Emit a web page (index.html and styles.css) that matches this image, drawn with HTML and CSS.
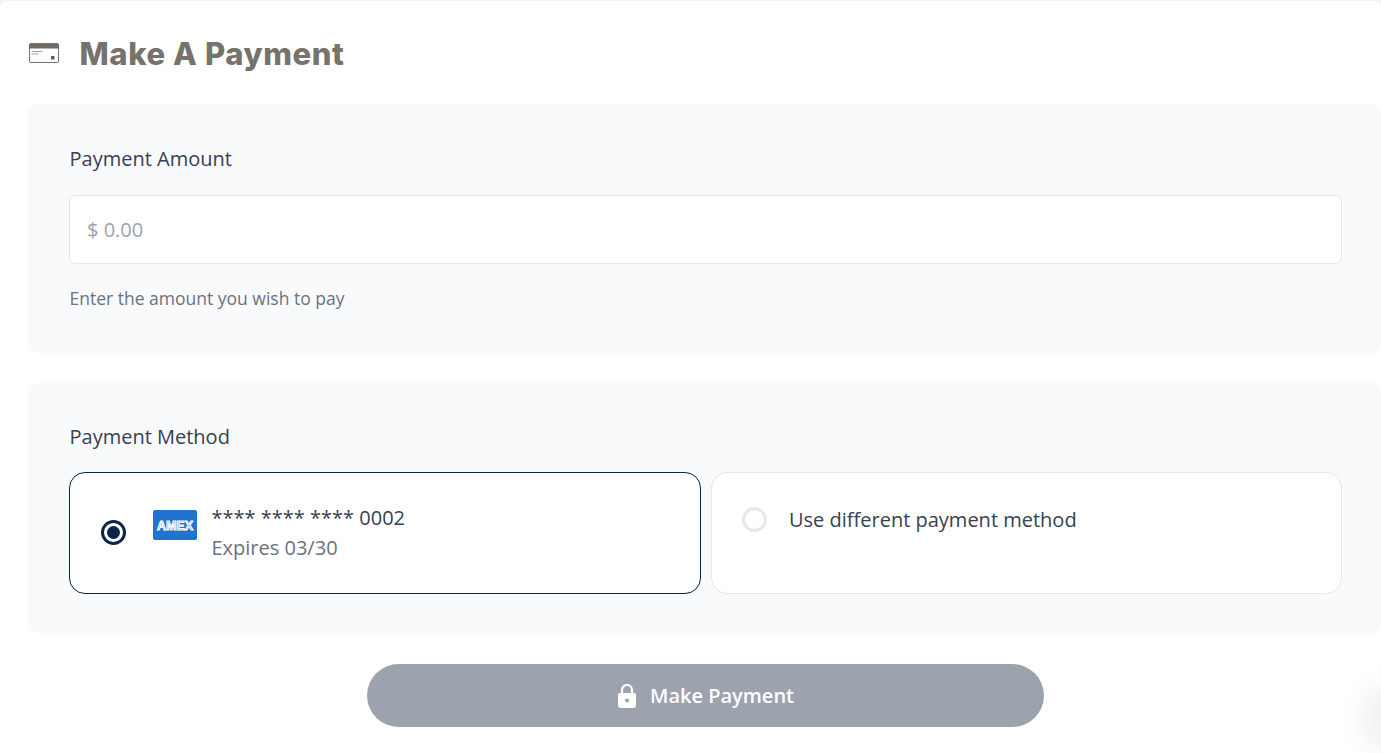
FILE: index.html
```html
<!DOCTYPE html>
<html lang="en">
<head>
<meta charset="utf-8">
<title>Make A Payment</title>
<link rel="stylesheet" href="styles.css">
</head>
<body>
<main class="page">
  <header class="title-row">
    <svg class="title-icon" width="32" height="22" viewBox="0 0 32 22" aria-hidden="true">
      <rect x="1.5" y="1.5" width="29" height="19" rx="1.5" fill="#fff" stroke="#77726b" stroke-width="1"/>
      <rect x="1" y="2" width="30" height="4.5" fill="#6f6a64"/>
      <rect x="3.5" y="9" width="11" height="1" fill="#a5a29d"/>
      <rect x="3.5" y="11.5" width="7" height="1" fill="#a5a29d"/>
      <rect x="23" y="14" width="3.5" height="3.5" fill="#5f5b55"/>
    </svg>
    <h1 class="title">Make A Payment</h1>
  </header>

  <section class="panel panel-amount">
    <label class="label">Payment Amount</label>
    <div class="input">$ 0.00</div>
    <p class="hint">Enter the amount you wish to pay</p>
  </section>

  <section class="panel panel-method">
    <label class="label">Payment Method</label>
    <div class="methods">
      <div class="method selected">
        <span class="radio-on"></span>
        <svg class="amex" width="44" height="30" viewBox="0 0 44 30" aria-hidden="true">
          <rect width="44" height="30" rx="2" fill="#2272cf"/>
          <text x="4" y="19.5" textLength="36" lengthAdjust="spacingAndGlyphs" class="amex-text">AMEX</text>
        </svg>
        <div class="card-info">
          <div class="card-number">**** **** **** 0002</div>
          <div class="card-exp">Expires 03/30</div>
        </div>
      </div>
      <div class="method other">
        <span class="radio-off"></span>
        <span class="other-text">Use different payment method</span>
      </div>
    </div>
  </section>

  <div class="actions">
    <button class="pay" type="button">
      <svg width="20" height="24" viewBox="0 0 20 24" aria-hidden="true">
        <path d="M5 10V6a5 5 0 0 1 10 0v4" fill="none" stroke="#fff" stroke-width="2.2"/>
        <path fill-rule="evenodd" fill="#fff" d="M2.500 9h15a1.500 1.500 0 0 1 1.500 1.500V21a3 3 0 0 1-3 3H4a3 3 0 0 1-3-3V10.500A1.500 1.500 0 0 1 2.500 9zM10 14.500a2 2 0 1 0 0 4 2 2 0 0 0 0-4z"/>
      </svg>
      <span>Make Payment</span>
    </button>
  </div>
</main>
<div class="corner-shadow"></div>
</body>
</html>
```

FILE: styles.css
```css
* { box-sizing: border-box; }
html, body { height: 100%; }
body {
  margin: 0;
  background: #f3f4f6;
  font-family: "Open Sans", "Liberation Sans", sans-serif;
  color: #374151;
  overflow: hidden;
  padding-top: 1px;
}
.page {
  background: #fff;
  border-radius: 8px 8px 0 0;
  height: 752px;
  padding: 0 0 0 28px;
}
.title-row {
  display: flex;
  align-items: center;
  height: 103px;
}
.title-icon { margin-right: 19.5px; }
.title {
  margin: 2px 0 0;
  font-family: "Inter", "Liberation Sans", sans-serif;
  font-size: 31px;
  font-weight: 800;
  letter-spacing: 0.6px;
  color: #77726b;
  line-height: 1;
}
.panel {
  background: #f9fafb;
  border-radius: 8px;
  padding: 0 39px 0 41px;
}
.panel-amount { height: 249px; padding-top: 41px; }
.panel-method { height: 250px; margin-top: 30px; padding-top: 40px; }
.label {
  display: block;
  padding-left: 0.5px;
  font-size: 20px;
  line-height: 27px;
  color: #374151;
}
.input {
  margin-top: 23px;
  height: 69px;
  background: #fff;
  border: 1px solid #e5e7eb;
  border-radius: 6px;
  padding: 0 17px;
  display: flex;
  align-items: center;
  font-size: 20px;
  color: #9ca3af;
}
.hint {
  margin: 22px 0 0;
  padding-left: 0.5px;
  font-size: 17.5px;
  line-height: 24px;
  color: #6b7280;
}
.methods {
  display: grid;
  grid-template-columns: 632px 631px;
  gap: 10px;
  margin-top: 22px;
}
.method {
  height: 122px;
  background: #fff;
  border-radius: 16px;
  border: 1px solid #e5e7eb;
  position: relative;
  display: flex;
}
.method.selected { border-color: #0b2447; align-items: flex-start; padding: 30px 0 0 83px; }
.method.other { align-items: flex-start; padding: 34px 0 0 30px; }
.radio-on {
  position: absolute;
  left: 31px;
  top: 47px;
  width: 25px;
  height: 25px;
  border-radius: 50%;
  border: 3px solid #0b2447;
  background: #fff;
}
.radio-on::after {
  content: "";
  position: absolute;
  left: 3px;
  top: 3px;
  width: 13px;
  height: 13px;
  border-radius: 50%;
  background: #0b2447;
}
.radio-off {
  width: 25px;
  height: 25px;
  border-radius: 50%;
  border: 3px solid #e5e7eb;
  background: #fff;
  flex: none;
}
.amex { flex: none; margin-top: 7px; }
.amex-text {
  font-family: "Liberation Sans", sans-serif;
  font-size: 12.5px;
  font-weight: 700;
  fill: #5f9be0;
  stroke: #fff;
  stroke-width: 1px;
}
.card-info { margin-left: 14.5px; }
.card-number { font-size: 20px; line-height: 30px; color: #374151; }
.card-exp { font-size: 20px; line-height: 30px; color: #6b7280; }
.other-text { margin-left: 22px; margin-top: -1px; font-size: 20px; line-height: 27px; color: #374151; }
.actions {
  display: flex;
  justify-content: center;
  margin-top: 31px;
}
.pay {
  width: 677px;
  height: 63px;
  border: 0;
  border-radius: 32px;
  background: #9ca3af;
  color: #fff;
  font-family: "Open Sans", "Liberation Sans", sans-serif;
  font-size: 20px;
  font-weight: 600;
  display: flex;
  align-items: center;
  justify-content: center;
  gap: 13px;
  margin-left: 2px;
}
.corner-shadow {
  position: fixed;
  right: -30px;
  bottom: 0;
  width: 50px;
  height: 70px;
  border-radius: 50%;
  background: rgba(0, 0, 0, 0.05);
  filter: blur(12px);
}
```
